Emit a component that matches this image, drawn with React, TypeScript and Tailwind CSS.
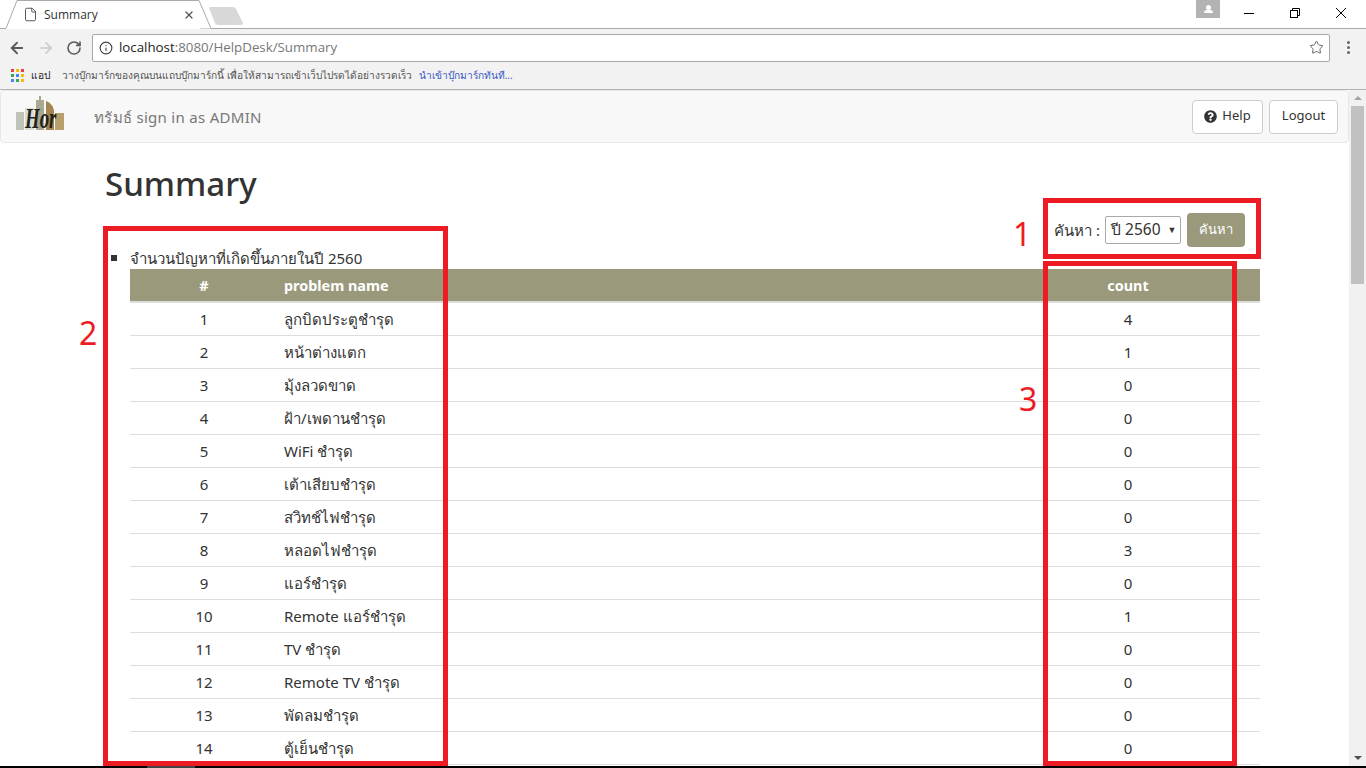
import { ArrowLeft, ArrowRight, File, Info, RotateCw, Star, X } from "lucide-react";
import { FaQuestionCircle } from "react-icons/fa";

const rows = [
  { name: "ลูกบิดประตูชำรุด", count: 4 },
  { name: "หน้าต่างแตก", count: 1 },
  { name: "มุ้งลวดขาด", count: 0 },
  { name: "ฝ้า/เพดานชำรุด", count: 0 },
  { name: "WiFi ชำรุด", count: 0 },
  { name: "เต้าเสียบชำรุด", count: 0 },
  { name: "สวิทช์ไฟชำรุด", count: 0 },
  { name: "หลอดไฟชำรุด", count: 3 },
  { name: "แอร์ชำรุด", count: 0 },
  { name: "Remote แอร์ชำรุด", count: 1 },
  { name: "TV ชำรุด", count: 0 },
  { name: "Remote TV ชำรุด", count: 0 },
  { name: "พัดลมชำรุด", count: 0 },
  { name: "ตู้เย็นชำรุด", count: 0 },
];

const appColors = ["#ea4335", "#fbbc05", "#ea4335", "#34a853", "#4285f4", "#fbbc05", "#4285f4", "#34a853", "#fbbc05"];

function AppsIcon() {
  return (
    <svg width="13" height="13" viewBox="0 0 13 13" className="shrink-0">
      {appColors.map((c, i) => (
        <rect key={i} x={(i % 3) * 5} y={Math.floor(i / 3) * 5} width="3" height="3" fill={c} />
      ))}
    </svg>
  );
}

function Logo() {
  return (
    <svg width="48" height="42" viewBox="0 0 48 42" className="shrink-0">
      <rect x="0" y="16" width="8" height="18" fill="#bfc4bb" />
      <rect x="9" y="12" width="9" height="22" fill="#dcdcd0" />
      <rect x="20" y="4" width="8" height="30" fill="#a9a98f" />
      <rect x="23" y="0" width="2" height="5" fill="#a9a98f" />
      <path d="M30 5 C35 7 38 11 38 16 V34 H30 Z" fill="#a5854f" />
      <rect x="39" y="17" width="9" height="17" fill="#b7a06b" />
      <text
        transform="translate(9 32) scale(0.82 1.25)"
        fontSize="23"
        fontStyle="italic"
        fontWeight="700"
        fill="#1f2421"
        fontFamily="'Liberation Serif', serif"
      >
        Hor
      </text>
    </svg>
  );
}

function BrowserChrome() {
  return (
    <div className="shrink-0 font-['Open_Sans','Noto_Sans',sans-serif]">
      {/* tab strip */}
      <div className="relative flex h-[29px] items-stretch justify-between bg-white">
        <svg className="absolute left-0 top-0" width="260" height="29" viewBox="0 0 260 29">
          <path d="M0 28.5 H6 M211 28.5 H260" fill="none" stroke="#a9a9a9" />
          <path d="M6 28.5 L17 .5 H199 L211 28.5" fill="#ffffff" stroke="#a9a9a9" />
          <path d="M209 8 Q209 7 211 7 H233 Q235 7 236 9 L243 23 Q243 25 241 25 H218 Q216 25 215 23 Z" fill="#d8d8d8" />
        </svg>
        <div className="relative flex h-full w-[200px] items-center pl-[23px] text-xs text-[#333]">
          <File size={15} strokeWidth={1.4} className="text-[#444]" />
          <span className="ml-[6px] w-[139px]">Summary</span>
          <X size={12} strokeWidth={2.4} className="text-[#555]" />
        </div>
        <div className="flex h-full grow justify-end border-b border-[#a9a9a9]">
          <div className="mr-[2px] flex">
            <div className="mr-[6px] flex h-[18px] w-[24px] items-center justify-center bg-[#b3b3b3]">
              <div className="flex flex-col items-center">
                <div className="h-[5px] w-[5px] rounded-full bg-white" />
                <div className="h-[3px] w-[9px] rounded-t-sm bg-white" />
              </div>
            </div>
            <div className="flex w-[46px] items-start justify-center pt-[13px]">
              <div className="h-px w-[10px] bg-black" />
            </div>
            <div className="flex w-[46px] items-start justify-center pt-[8px]">
              <svg width="10" height="10" viewBox="0 0 10 10" fill="none" stroke="#000">
                <rect x=".5" y="2.5" width="7" height="7" />
                <path d="M2.5 2.5 V.5 H9.5 V7.5 H7.5" />
              </svg>
            </div>
            <div className="flex w-[46px] items-start justify-center pt-[8px]">
              <svg width="10" height="10" viewBox="0 0 10 10" fill="none" stroke="#000">
                <path d="M0 0 L10 10 M10 0 L0 10" />
              </svg>
            </div>
          </div>
        </div>
      </div>
      {/* toolbar */}
      <div className="flex h-[33px] items-center bg-[#f2f2f2] pl-[8px] pr-[16px] pt-[4px]">
        <ArrowLeft size={18} strokeWidth={2.4} className="text-[#5a5a5a]" />
        <ArrowRight size={18} strokeWidth={2} className="ml-[11px] text-[#c8c8c8]" />
        <RotateCw size={16} strokeWidth={2.4} className="ml-[11px] text-[#5a5a5a]" />
        <div className="ml-[10px] flex h-[28px] grow items-center rounded-[2px] border border-[#a9a9a9] bg-white pl-[6px] pr-[5px] text-[13.3px]">
          <Info size={14} strokeWidth={2} className="text-[#444]" />
          <span className="ml-[6px] text-[#222]">localhost</span>
          <span className="text-[#777]">:8080/HelpDesk/Summary</span>
          <Star size={15} strokeWidth={1.6} className="ml-auto text-[#666]" />
        </div>
        <div className="ml-[17px] flex flex-col gap-[2px]">
          <div className="h-[3px] w-[3px] rounded-full bg-[#666]" />
          <div className="h-[3px] w-[3px] rounded-full bg-[#666]" />
          <div className="h-[3px] w-[3px] rounded-full bg-[#666]" />
        </div>
      </div>
      {/* bookmarks */}
      <div className="flex h-[28px] items-center border-b border-[#b4b4b4] bg-[#f2f2f2] pl-[11px] text-[10.15px]">
        <AppsIcon />
        <span className="ml-[7px] w-[31px] text-[#222]">แอป</span>
        <span className="text-[#555]">วางบุ๊กมาร์กของคุณบนแถบบุ๊กมาร์กนี้ เพื่อให้สามารถเข้าเว็บไปรดได้อย่างรวดเร็ว</span>
        <span className="ml-[7px] text-[10.2px] text-[#3b5bc4]">นำเข้าบุ๊กมาร์กทันที...</span>
      </div>
    </div>
  );
}

function Navbar() {
  return (
    <div className="flex h-[53px] shrink-0 items-center rounded-[4px] border border-[#e7e7e7] bg-[#f8f8f8] pl-[15px] pr-[10px]">
      <Logo />
      <span className="ml-[30px] pt-px text-[15px] tracking-[0.3px] text-[#777]">ทรัมธ์ sign in as ADMIN</span>
      <button className="ml-auto flex h-[34px] w-[71px] items-center justify-center gap-[5px] rounded-[4px] border border-[#ccc] bg-white pb-px text-[13px] text-[#333]">
        <FaQuestionCircle size={13} />
        Help
      </button>
      <button className="ml-[6px] h-[34px] w-[69px] rounded-[4px] border border-[#ccc] bg-white pb-px text-[13px] text-[#333]">
        Logout
      </button>
    </div>
  );
}

function SummaryTable() {
  return (
    <table className="w-[1130px] table-fixed border-collapse text-[15px] text-[#333]">
      <thead>
        <tr className="h-[33px] border-b-2 border-[#ddd] bg-[#9a997b] text-[14.4px] font-bold text-white">
          <th className="w-[148px] pt-px text-center">#</th>
          <th className="px-[6px] pt-px text-left">problem name</th>
          <th className="w-[264px] pt-px text-center">count</th>
        </tr>
      </thead>
      <tbody>
        {rows.map((row, i) => (
          <tr key={row.name} className="h-[33px] border-b border-[#ddd]">
            <td className="pt-px text-center">{i + 1}</td>
            <td className="px-[6px] pt-px">{row.name}</td>
            <td className="pt-px text-center">{row.count}</td>
          </tr>
        ))}
      </tbody>
    </table>
  );
}

function Annotations() {
  return (
    <>
      <div className="absolute left-[1043px] top-[198px] h-[61px] w-[218px] border-[5px] border-[#ed1c24]" />
      <div className="absolute left-[103px] top-[226px] h-[540px] w-[345px] border-[5px] border-[#ed1c24]" />
      <div className="absolute left-[1043px] top-[261px] h-[505px] w-[194px] border-[5px] border-[#ed1c24]" />
      <span className="absolute left-[1013px] top-[214px] text-[32px] leading-[40px] text-[#ed1c24]">1</span>
      <span className="absolute left-[79px] top-[313px] text-[32px] leading-[40px] text-[#ed1c24]">2</span>
      <span className="absolute left-[1019px] top-[379px] text-[32px] leading-[40px] text-[#ed1c24]">3</span>
    </>
  );
}

export default function App() {
  return (
    <div className="relative flex h-[768px] w-[1366px] flex-col overflow-hidden bg-white font-['Noto_Sans','Open_Sans',sans-serif]">
      <BrowserChrome />
      <div className="flex min-h-0 grow">
        <div className="min-w-0 grow overflow-hidden">
          <Navbar />
          <div className="pl-[105px] pr-[89px]">
            <h1 className="mt-[19px] text-[33px] font-medium leading-[44px] text-[#333]">Summary</h1>
            <div className="mt-[6px] flex h-[36px] items-center justify-end pr-[15px] text-[15px] text-[#333]">
              คันหา :
              <div className="ml-[5px] flex h-[28px] w-[76px] items-center rounded-[2px] border border-[#a9a9a9] bg-white pl-[5px] text-[15.5px]">
                ปี 2560
                <span className="ml-[7px] text-[9px]">▼</span>
              </div>
              <button className="ml-[6px] h-[34px] w-[58px] rounded-[4px] bg-[#9a997b] text-[13px] text-white">คันหา</button>
            </div>
            <ul className="-mt-px list-none pl-[25px]">
              <li className="relative h-[22px] text-[15px] leading-[22px] text-[#333]">
                <span className="absolute left-[-19px] top-[8px] h-[6px] w-[6px] bg-[#333]" />
                จำนวนปัญหาที่เกิดขึ้นภายในปี 2560
              </li>
            </ul>
            <div className="pl-[25px]">
              <SummaryTable />
            </div>
          </div>
        </div>
        {/* scrollbar */}
        <div className="flex w-[17px] shrink-0 flex-col items-center bg-[#f1f1f1]">
          <span className="mt-[6px] h-0 w-0 border-x-[4px] border-b-[4px] border-x-transparent border-b-[#a3a3a3]" />
          <div className="mt-[6px] h-[178px] w-[13px] bg-[#c1c1c1]" />
          <span className="mb-[6px] mt-auto h-0 w-0 border-x-[4px] border-t-[4px] border-x-transparent border-t-[#505050]" />
        </div>
      </div>
      {/* sliver of the taskbar */}
      <div className="h-[2px] shrink-0 bg-black pl-[147px]">
        <div className="h-full w-[48px] bg-[#444]" />
      </div>
      <Annotations />
    </div>
  );
}
